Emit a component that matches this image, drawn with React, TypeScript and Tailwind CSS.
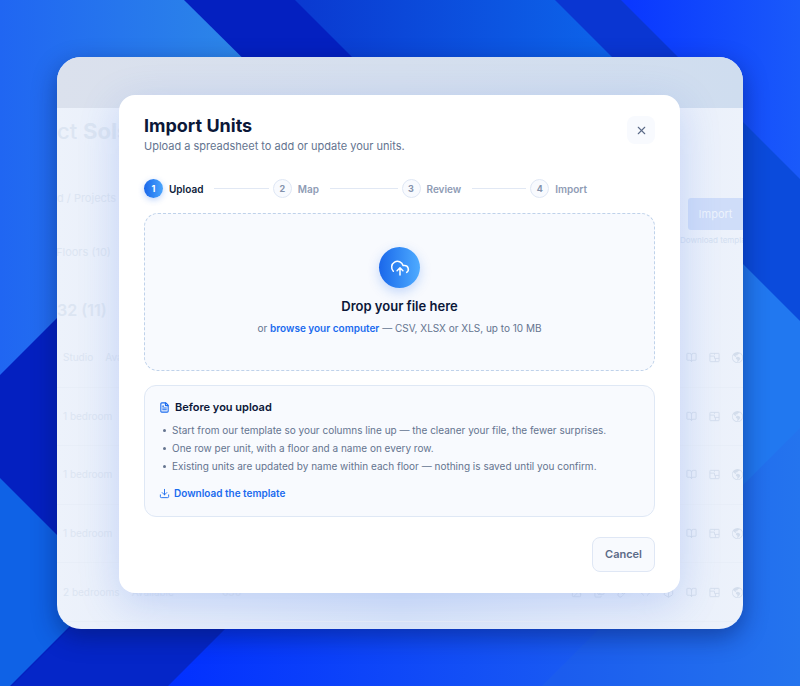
import React, { useRef } from "react";
import { BookOpen, Box, Code, Download, FileText, Image, Images, Link, X } from "lucide-react";
import { BsGlobeAmericas } from "react-icons/bs";

interface Step {
  id: number;
  label: string;
}

interface UnitRow {
  id: number;
  type: string;
  status: string;
  area: string;
}

const steps: Step[] = [
  { id: 1, label: "Upload" },
  { id: 2, label: "Map" },
  { id: 3, label: "Review" },
  { id: 4, label: "Import" },
];

const tips = [
  "Start from our template so your columns line up — the cleaner your file, the fewer surprises.",
  "One row per unit, with a floor and a name on every row.",
  "Existing units are updated by name within each floor — nothing is saved until you confirm.",
];

const units: UnitRow[] = [
  { id: 1, type: "Studio", status: "Available", area: "" },
  { id: 2, type: "1 bedroom", status: "", area: "" },
  { id: 3, type: "1 bedroom", status: "", area: "" },
  { id: 4, type: "1 bedroom", status: "", area: "" },
  { id: 5, type: "2 bedrooms", status: "Available", area: "630" },
];

function Wallpaper() {
  return (
    <svg
      className="absolute inset-0 h-full w-full"
      viewBox="0 0 800 686"
      preserveAspectRatio="xMidYMid slice"
      aria-hidden="true"
    >
      <defs>
        <linearGradient id="topLeft" gradientUnits="userSpaceOnUse" x1="0" y1="0" x2="240" y2="0">
          <stop offset="0" stopColor="#2066f2" />
          <stop offset="1" stopColor="#2c86e8" />
        </linearGradient>
        <linearGradient id="topMid" gradientUnits="userSpaceOnUse" x1="295" y1="0" x2="610" y2="0">
          <stop offset="0" stopColor="#0a39d0" />
          <stop offset="1" stopColor="#0d64ea" />
        </linearGradient>
        <linearGradient id="topRight" gradientUnits="userSpaceOnUse" x1="630" y1="0" x2="800" y2="0">
          <stop offset="0" stopColor="#0a38ff" />
          <stop offset="1" stopColor="#1a5afa" />
        </linearGradient>
        <linearGradient id="bottomMid" gradientUnits="userSpaceOnUse" x1="170" y1="0" x2="590" y2="0">
          <stop offset="0" stopColor="#0230ff" />
          <stop offset="1" stopColor="#1a5cf2" />
        </linearGradient>
        <linearGradient id="bottomRight" gradientUnits="userSpaceOnUse" x1="560" y1="0" x2="800" y2="0">
          <stop offset="0" stopColor="#1b5cee" />
          <stop offset="1" stopColor="#2474ee" />
        </linearGradient>
      </defs>
      <rect width="800" height="686" fill="#0420c0" />
      <path d="M0 0H184L280 95L0 375Z" fill="url(#topLeft)" />
      <path d="M295 0H570L700 130V405Z" fill="url(#topMid)" />
      <path d="M555 0H640L800 160V245Z" fill="#0a36d2" />
      <path d="M700 70L800 170V330L700 230Z" fill="#0b4bdc" />
      <path d="M621 0H800V179Z" fill="url(#topRight)" />
      <path d="M700 221L800 321V460L700 560Z" fill="#2178f0" />
      <path d="M0 478L109 587L10 686H0Z" fill="#0f62e6" />
      <path d="M12 686L111 587H267L168 686Z" fill="#0526c8" />
      <path d="M168 686L267 587H680V686Z" fill="url(#bottomMid)" />
      <path d="M542 686L800 428V686Z" fill="url(#bottomRight)" />
    </svg>
  );
}

function FloorPlanIcon() {
  return (
    <svg viewBox="0 0 24 24" className="h-[11px] w-[11px]" fill="none" stroke="currentColor" strokeWidth="2" aria-hidden="true">
      <rect x="2" y="3" width="20" height="18" rx="1" />
      <path d="M2 9h10M12 3v3M12 9v5M12 14h10M14 14v7" />
    </svg>
  );
}

function UploadCloudIcon() {
  return (
    <svg
      viewBox="0 -1 24 24"
      className="h-5 w-5"
      fill="none"
      stroke="currentColor"
      strokeWidth="1.8"
      strokeLinecap="round"
      strokeLinejoin="round"
      aria-hidden="true"
    >
      <path d="M4 14.9A7 7 0 1 1 15.71 8h1.79a4.5 4.5 0 0 1 2.5 8.24" />
      <path d="M12 19.5V11M8.5 14.3L12 10.8l3.5 3.5" />
    </svg>
  );
}

// faded units page that sits behind the dialog
function UnitsPage() {
  return (
    <div
      className="col-start-1 row-start-1 flex flex-col overflow-hidden bg-gradient-to-r from-[#edf2fb] via-[#dbe6f9] to-[#edf2fb] text-[#dce5f2] select-none"
      aria-hidden="true"
    >
      <div className="h-[51px] shrink-0 bg-gradient-to-r from-[#dbe1ed] to-[#cfddef]" />
      <div className="h-12 shrink-0 pt-[7px] text-[22px] leading-8 font-medium whitespace-nowrap">
        ct <span className="font-bold">Sols</span>
      </div>
      <div className="flex h-[84px] shrink-0 items-start justify-between">
        <span className="pt-8 text-[11px] leading-5">d / Projects</span>
        <div className="flex w-[63px] flex-col pt-[42px]">
          <span className="ml-2 flex h-8 items-center justify-center rounded-l-[3px] bg-[#cfddf9] text-[11px] text-[#edf3fc]">
            Import
          </span>
          <span className="mt-1 text-[8px] leading-3 whitespace-nowrap text-[#d3dff1]">Download template</span>
        </div>
      </div>
      <div className="h-[89px] shrink-0">
        <div className="-ml-px text-[11px] leading-6">Floors (10)</div>
        <div className="pt-[30px] text-base leading-8 font-semibold">32 (11)</div>
      </div>
      <div className="flex flex-1 flex-col pb-[7px]">
        {units.map((unit) => (
          <div key={unit.id} className="flex flex-1 items-center border-b border-[#e8eef8] pl-[6px] text-[10px]">
            <span className="mr-3 shrink-0">{unit.type}</span>
            <span>{unit.status}</span>
            <span className="ml-12 font-semibold">{unit.area}</span>
            <span className="ml-auto flex items-center gap-3 text-[#d3ddec]">
              <Image size={11} />
              <Images size={11} />
              <Link size={11} />
              <Code size={11} />
              <Box size={11} />
              <BookOpen size={11} />
              <FloorPlanIcon />
              <BsGlobeAmericas size={11} />
            </span>
          </div>
        ))}
      </div>
    </div>
  );
}

function StepList({ current }: { current: number }) {
  return (
    <ol className="mt-6 grid grid-cols-4 gap-x-1">
      {steps.map((step, index) => (
        <li
          key={step.id}
          className="flex items-center"
          aria-current={step.id === current ? "step" : undefined}
        >
          <span
            className={
              step.id === current
                ? "flex h-[19px] w-[19px] items-center justify-center rounded-full bg-gradient-to-r from-[#1b67ea] to-[#4ba5fd] text-[9px] font-bold text-white shadow-[0_2px_6px_rgba(37,110,240,0.3)]"
                : "flex h-[19px] w-[19px] items-center justify-center rounded-full border border-[#dfe7f5] bg-[#f8fafe] text-[9px] font-bold text-[#8492ac]"
            }
          >
            {step.id}
          </span>
          <span
            className={
              step.id === current
                ? "ml-[6px] text-[10px] leading-4 font-semibold text-[#0d1b3a]"
                : "ml-[6px] text-[10px] leading-4 font-semibold text-[#8f9cb5]"
            }
          >
            {step.label}
          </span>
          {index < steps.length - 1 && <span className="ml-[11px] h-px flex-1 bg-[#e1e8f4]" />}
        </li>
      ))}
    </ol>
  );
}

function ImportDialog() {
  const fileInput = useRef<HTMLInputElement>(null);

  return (
    <div
      role="dialog"
      aria-labelledby="import-title"
      className="z-10 col-start-1 row-start-1 mr-[63px] ml-[62px] mt-[38px] mb-9 rounded-[16px] bg-white px-[25px] pt-5 pb-[21px] shadow-[0_10px_40px_rgba(60,110,230,0.22)]"
    >
      <div className="flex items-start justify-between">
        <div>
          <h1 id="import-title" className="text-[18px] leading-[22px] font-bold text-[#0b1738]">
            Import Units
          </h1>
          <p className="text-[11px] leading-[18px] text-[#64748f]">
            Upload a spreadsheet to add or update your units.
          </p>
        </div>
        <button
          type="button"
          aria-label="Close"
          className="mt-px flex h-7 w-7 items-center justify-center rounded-lg bg-[#f8fafe] text-[#5c6b88]"
        >
          <X size={13} strokeWidth={2} />
        </button>
      </div>

      <StepList current={1} />

      <div className="mt-[15px] flex flex-col items-center rounded-[14px] border border-dashed border-[#bfd2ea] bg-[#f8fafe] pt-[33px] pb-8">
        <div className="flex h-[41px] w-[41px] items-center justify-center rounded-full bg-gradient-to-r from-[#1b67ea] to-[#4fabff] text-white shadow-[0_4px_12px_rgba(37,110,240,0.25)]">
          <UploadCloudIcon />
        </div>
        <h2 className="mt-2 text-[13px] leading-5 font-semibold text-[#0b1738]">Drop your file here</h2>
        <p className="mt-0.5 text-[10px] leading-5 text-[#64748f]">
          or{" "}
          <button
            type="button"
            onClick={() => fileInput.current?.click()}
            className="font-semibold text-[#1a6bee]"
          >
            browse your computer
          </button>{" "}
          — CSV, XLSX or XLS, up to 10 MB
        </p>
        <input
          ref={fileInput}
          type="file"
          accept=".csv,.xlsx,.xls"
          aria-label="Spreadsheet file"
          className="hidden"
        />
      </div>

      <section className="mt-[14px] rounded-[12px] border border-[#dfe8f5] bg-[#f8fafe] px-[14px] pt-[13px] pb-[15px]">
        <h3 className="flex items-center gap-[5px] text-[11px] leading-4 font-semibold text-[#0b1738]">
          <FileText size={11} strokeWidth={2.4} className="text-[#1a6bee]" />
          Before you upload
        </h3>
        <ul className="mt-[6px] pl-1 text-[10px] leading-[18px] text-[#64748f]">
          {tips.map((tip) => (
            <li
              key={tip}
              className="flex items-center gap-[6px] before:h-[3px] before:w-[3px] before:shrink-0 before:rounded-full before:bg-[#64748f] before:content-['']"
            >
              {tip}
            </li>
          ))}
        </ul>
        <a href="#template" className="mt-[10px] flex w-fit items-center gap-1 text-[10px] leading-4 font-semibold text-[#1a6bee]">
          <Download size={11} />
          Download the template
        </a>
      </section>

      <div className="mt-5 flex justify-end">
        <button
          type="button"
          className="h-[35px] rounded-lg border border-[#dfe7f5] bg-[#f8fafe] px-3 text-[11px] font-semibold text-[#5c6b88]"
        >
          Cancel
        </button>
      </div>
    </div>
  );
}

export default function App() {
  return (
    <div className="relative flex min-h-screen flex-col justify-center overflow-hidden bg-[#0420c0] p-[57px] font-['Inter',sans-serif]">
      <Wallpaper />
      <main className="relative grid grid-cols-1 overflow-hidden rounded-3xl shadow-[0_8px_24px_rgba(5,20,80,0.45)]">
        <UnitsPage />
        <ImportDialog />
      </main>
    </div>
  );
}
